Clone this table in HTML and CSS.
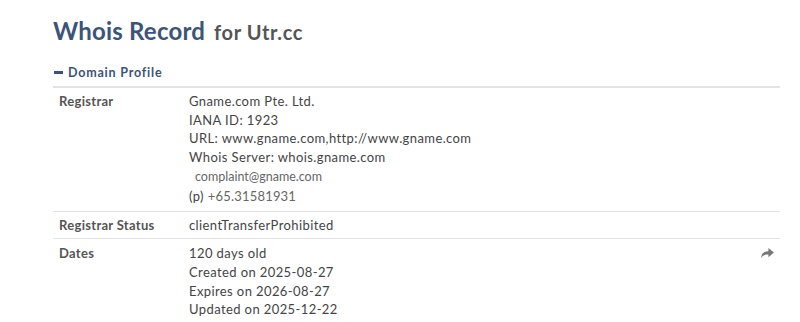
FILE: index.html
```html
<!DOCTYPE html>
<html>
<head>
<meta charset="utf-8">
<link rel="stylesheet" href="styles.css">
</head>
<body>
<div class="page">
  <h1 class="title">Whois Record <small>for Utr.cc</small></h1>
  <div class="section-head">
    <span class="minus"></span>
    <span>Domain Profile</span>
  </div>
  <div class="table">
    <div class="row registrar">
      <div class="label">Registrar</div>
      <div class="value">
        <div>Gname.com Pte. Ltd.</div>
        <div>IANA ID: 1923</div>
        <div>URL: www.gname.com,http://www.gname.com</div>
        <div>Whois Server: whois.gname.com</div>
        <div class="email">complaint@gname.com</div>
        <div class="phone"><span class="p">(p)</span> <span class="num">+65.31581931</span></div>
      </div>
    </div>
    <div class="row">
      <div class="label">Registrar Status</div>
      <div class="value"><div>clientTransferProhibited</div></div>
    </div>
    <div class="row dates">
      <div class="label">Dates</div>
      <div class="value">
        <div>120 days old</div>
        <div>Created on 2025-08-27</div>
        <div>Expires on 2026-08-27</div>
        <div>Updated on 2025-12-22</div>
      </div>
      <svg class="share" viewBox="0 0 14 12" width="13" height="11"><path d="M8 0 L14 5 L8 10 L8 7 C4 7 2 8 0 11 C0.5 6 3 3.5 8 3.5 Z" fill="#777"/></svg>
    </div>
  </div>
</div>
</body>
</html>
```
FILE: styles.css
```css
* { box-sizing: border-box; }
html, body { margin: 0; padding: 0; background: #fff; }
body { font-family: Lato, "Open Sans", sans-serif; color: #4a4a4a; }
.page { padding: 16px 20px 0 53px; }
.title {
  margin: 0;
  font-size: 24px;
  font-weight: 700;
  color: #3b5479;
  line-height: 30px;
  letter-spacing: 0.2px;
}
.title small {
  font-size: 20px;
  color: #555;
  font-weight: 700;
  margin-left: 3px;
  letter-spacing: 0.6px;
}
.section-head {
  display: flex;
  align-items: center;
  gap: 5px;
  margin-top: 18px;
  padding: 0 0 6px 1px;
  font-size: 12.5px;
  font-weight: 700;
  color: #3b5479;
  letter-spacing: 0.8px;
  border-bottom: 2px solid #e3e3e3;
}
.minus { width: 9px; height: 3px; background: #3b5479; display: inline-block; }
.table { display: flex; flex-direction: column; }
.row {
  display: flex;
  position: relative;
  padding: 4px 0 4px 6px;
  border-bottom: 1px solid #e3e3e3;
}
.row.registrar { padding-bottom: 5px; }
.row.dates { padding-top: 5px; }
.label {
  width: 130px;
  font-size: 13px;
  font-weight: 700;
  color: #555;
  line-height: 18px;
  letter-spacing: 0.3px;
}
.value {
  flex: 1;
  font-size: 13px;
  color: #444;
  line-height: 18.6px;
  letter-spacing: 0.4px;
}
.email { font-size: 12.5px; color: #666; padding-left: 6px; line-height: 21px; letter-spacing: 0; }
.phone { line-height: 18.5px; }
.num { color: #666; letter-spacing: 0.2px; }
.share { position: absolute; right: 6px; top: 9px; }
```
